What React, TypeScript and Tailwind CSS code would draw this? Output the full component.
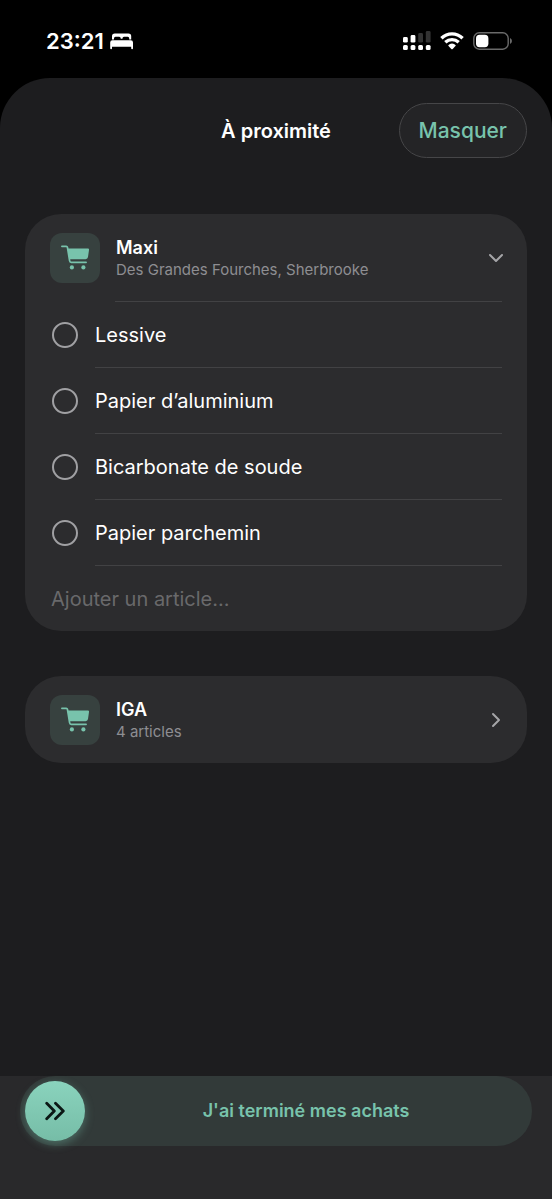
import { useState } from "react";
import { ChevronDown, ChevronRight } from "lucide-react";

const ITEMS = ["Lessive", "Papier d’aluminium", "Bicarbonate de soude", "Papier parchemin"];

function BedIcon() {
  return (
    <svg width="24" height="17" viewBox="0 0 24 17" fill="#fff" aria-hidden="true">
      <path d="M2 6.6V3.2Q2 .4 4.8.4H18.4Q21.2.4 21.2 3.2V6.6H19.2V5.2Q19.2 3.7 17.7 3.7H14Q12.5 3.7 12.5 5.2V5.8H10.7V5.2Q10.7 3.7 9.2 3.7H5.5Q4 3.7 4 5.2V6.6Z" />
      <path d="M.2 9.4Q.2 7.2 2.4 7.2H20.8Q23 7.2 23 9.4V15.3Q23 16.2 22.1 16.2Q21.2 16.2 21.2 15.3V13.8H2V15.3Q2 16.2 1.1 16.2Q.2 16.2 .2 15.3Z" />
    </svg>
  );
}

function SignalIcon() {
  return (
    <svg width="28" height="20" viewBox="0 0 28 20" fill="#fff" aria-hidden="true">
      <rect x="0" y="6" width="4.8" height="5.6" rx="1.4" />
      <rect x="7.6" y="4" width="4.8" height="7.6" rx="1.4" />
      <rect x="15.2" y="2" width="4.8" height="9.6" rx="1.4" fill="#333" />
      <rect x="22.8" y="0" width="4.8" height="11.6" rx="1.4" fill="#333" />
      <rect x="0" y="14" width="4.8" height="5" rx="1.5" />
      <rect x="7.6" y="14" width="4.8" height="5" rx="1.5" />
      <rect x="15.2" y="14" width="4.8" height="5" rx="1.5" />
      <rect x="22.8" y="14" width="4.8" height="5" rx="1.5" />
    </svg>
  );
}

function WifiIcon() {
  return (
    <svg width="24" height="18" viewBox="0 0 24 18" fill="none" stroke="#fff" strokeWidth="3.4" aria-hidden="true">
      <path d="M1.4 6.2Q6 1.9 12 1.9T22.6 6.2" />
      <path d="M5.3 10.2Q8.2 7.6 12 7.6T18.7 10.2" />
      <path d="M8.1 13.6Q9.8 11.6 12 11.6T15.9 13.6L12.7 17Q12 17.6 11.3 17Z" fill="#fff" stroke="none" />
    </svg>
  );
}

function BatteryIcon() {
  return (
    <svg width="40" height="18" viewBox="0 0 40 18" aria-hidden="true">
      <rect x=".8" y=".8" width="34.4" height="16.4" rx="5.4" fill="none" stroke="#6a6a6a" strokeWidth="1.4" />
      <rect x="3" y="2.8" width="12.4" height="12.4" rx="3.6" fill="#fff" />
      <path d="M37 6V12Q39 11.2 39 9T37 6Z" fill="#6a6a6a" />
    </svg>
  );
}

function CartBadge() {
  return (
    <span className="flex size-[50px] shrink-0 items-center justify-center rounded-xl bg-[#37413f]">
      <svg width="28" height="25" viewBox="0 0 28 25" fill="#78c3ac" aria-hidden="true">
        <path
          d="M.9 1.3H5.3Q6.2 1.3 6.4 2.2L8.6 15.7Q8.8 17.3 10.2 17.3H25.1"
          fill="none"
          stroke="#78c3ac"
          strokeWidth="1.7"
          strokeLinecap="round"
          strokeLinejoin="round"
        />
        <path d="M6.5 3.6H27.1Q28.2 3.6 28 4.9L27 12.1Q26.7 14.2 24.6 14.2H8.3Z" />
        <circle cx="10.9" cy="22.4" r="2.1" />
        <circle cx="22.4" cy="22.4" r="2.1" />
      </svg>
    </span>
  );
}

function StatusBar() {
  return (
    <div className="flex h-[78px] items-start justify-between pt-[28px] pr-[39px] pl-[46px]">
      <div className="flex h-[26px] items-center gap-[6px] text-[22px] font-semibold">
        <span>23:21</span>
        <BedIcon />
      </div>
      <div className="flex h-[26px] items-center gap-[9px]">
        <SignalIcon />
        <WifiIcon />
        <BatteryIcon />
      </div>
    </div>
  );
}

function StoreHeader({ name, detail, open }: { name: string; detail: string; open?: boolean }) {
  return (
    <button type="button" aria-expanded={!!open} className="flex h-[87px] w-full items-center gap-4 px-[25px] text-left">
      <CartBadge />
      <span className="min-w-0 flex-1">
        <span className="block text-lg leading-6 font-semibold">{name}</span>
        <span className="block text-[15px] leading-5 text-[#8e8e92]">{detail}</span>
      </span>
      {open ? (
        <ChevronDown size={24} color="#a5a5a8" className="-mr-1.5" />
      ) : (
        <ChevronRight size={24} color="#a5a5a8" className="-mr-1.5" />
      )}
    </button>
  );
}

function ItemRow({ label }: { label: string }) {
  return (
    <li className="pr-[25px] pl-[27px]">
      <label className="flex items-center gap-[17px] text-xl">
        <input type="checkbox" className="size-[26px] shrink-0 appearance-none rounded-full border-2 border-[#a0a0a3] checked:bg-[#78c3ac]" />
        <span className="flex h-[66px] flex-1 items-center border-b border-[#424244]">{label}</span>
      </label>
    </li>
  );
}

function FinishSlider() {
  const [value, setValue] = useState(0);
  return (
    <div className="relative flex h-[70px] items-center rounded-full bg-[#323a39] px-[5px]">
      <label htmlFor="finish" className="flex-1 pl-[60px] text-center text-lg font-semibold text-[#78c3ac]">
        J'ai terminé mes achats
      </label>
      <div className="pointer-events-none absolute inset-y-[5px] right-[65px] left-[5px]">
        <span
          className="absolute flex size-[60px] items-center justify-center rounded-full bg-linear-to-b from-[#8ad3bd] to-[#76bda7] shadow-[0_3px_10px_#78c3ac66]"
          style={{ left: `${value}%` }}
        >
          <svg width="20" height="20" viewBox="0 0 20 20" fill="none" stroke="#0b1714" strokeWidth="2.8" strokeLinecap="round" strokeLinejoin="round" aria-hidden="true">
            <path d="M1.7 2.2L9.3 10L1.7 17.8" />
            <path d="M10.5 2.2L18.3 10L10.5 17.8" />
          </svg>
        </span>
      </div>
      <input
        id="finish"
        type="range"
        min={0}
        max={100}
        value={value}
        onChange={(e) => setValue(Number(e.target.value))}
        className="absolute inset-0 size-full opacity-0"
      />
    </div>
  );
}

export default function App() {
  return (
    <div className="flex min-h-screen flex-col bg-black font-['Inter','Liberation_Sans',sans-serif] text-white">
      <StatusBar />
      <div className="flex flex-1 flex-col rounded-t-[50px] bg-[#1d1d1f]">
        <header className="grid grid-cols-[1fr_auto_1fr] items-center px-[25px] pt-[25px]">
          <h1 className="col-start-2 text-xl font-semibold">À proximité</h1>
          <button
            type="button"
            className="h-[55px] justify-self-end rounded-full border border-[#464648] bg-[#242426] px-[19px] text-[21px] font-medium text-[#78c3ac]"
          >
            Masquer
          </button>
        </header>

        <main className="flex flex-1 flex-col gap-[45px] px-[25px] pt-14 pb-11">
          <section className="rounded-[36px] bg-[#2c2c2e]">
            <StoreHeader name="Maxi" detail="Des Grandes Fourches, Sherbrooke" open />
            <div className="mr-[25px] ml-[90px] border-b border-[#424244]" />
            <ul>
              {ITEMS.map((item) => (
                <ItemRow key={item} label={item} />
              ))}
            </ul>
            <input
              type="text"
              aria-label="Ajouter un article"
              placeholder="Ajouter un article..."
              className="block h-[65px] w-full bg-transparent px-[26px] text-xl outline-none placeholder:text-[#69696b]"
            />
          </section>
          <section className="rounded-[36px] bg-[#2c2c2e]">
            <StoreHeader name="IGA" detail="4 articles" />
          </section>
        </main>

        <footer className="bg-[#29292b] px-5 pb-[53px]">
          <FinishSlider />
        </footer>
      </div>
    </div>
  );
}
